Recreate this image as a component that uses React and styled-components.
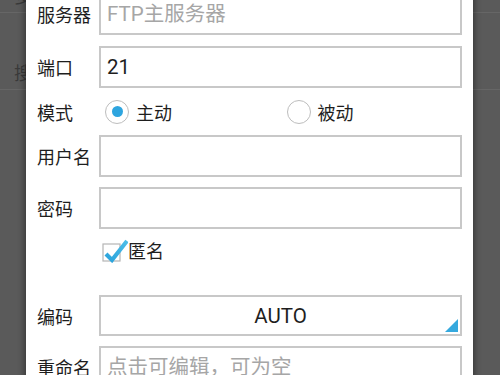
import React from "react";
import styled, { createGlobalStyle } from "styled-components";

const Global = createGlobalStyle`
  html, body { margin: 0; padding: 0; background: #5a5a5a; overflow: hidden; }
  * { box-sizing: border-box; }
`;

const FONT = `Roboto, "Noto Sans CJK SC", "Noto Sans", sans-serif`;

const Screen = styled.div`
  position: relative;
  width: 500px;
  height: 375px;
  overflow: hidden;
  background: #5a5a5a;
  font-family: ${FONT};
`;

const BgList = styled.div`
  display: flex;
  flex-direction: column;
`;

const BgRow = styled.div`
  height: ${(p) => p.$h}px;
  padding-left: 14px;
  padding-top: ${(p) => p.$pt}px;
  border-bottom: 1px solid #666;
  color: #3a3a3a;
  font-size: 18px;
  line-height: 18px;
  overflow: hidden;
`;

const Overlay = styled.div`
  position: absolute;
  inset: 0;
  display: flex;
  align-items: flex-start;
`;

const Dialog = styled.div`
  margin-left: 26px;
  margin-top: -18px;
  width: 447px;
  background: #fff;
  padding: 11px 11px 0 11px;
  box-shadow: 0 0 6px 2px rgba(0, 0, 0, 0.35);
  display: flex;
  flex-direction: column;
`;

const Row = styled.div`
  display: grid;
  grid-template-columns: 62px 1fr;
  align-items: center;
  height: ${(p) => p.$h}px;
  margin-bottom: ${(p) => p.$mb || 0}px;
`;

const Label = styled.div`
  font-size: 18px;
  color: #1e1e1e;
  white-space: nowrap;
`;

const TextInput = styled.input`
  height: 100%;
  width: 100%;
  border: 2px solid #c8c8c8;
  border-radius: 0;
  padding: 0 6px;
  font-family: ${FONT};
  font-size: 20.5px;
  color: #1e1e1e;
  background: #fff;
  outline: none;
  &::placeholder { color: #a6a6a6; }
`;

const Select = styled.div`
  position: relative;
  height: 100%;
  border: 2px solid #c8c8c8;
  display: flex;
  align-items: center;
  justify-content: center;
  font-size: 20.5px;
  color: #1e1e1e;
`;

const Corner = styled.div`
  position: absolute;
  right: 2px;
  bottom: 2px;
  width: 13px;
  height: 13px;
  background: #35a9de;
  clip-path: polygon(100% 0, 100% 100%, 0 100%);
`;

const RadioGroup = styled.div`
  display: grid;
  grid-template-columns: 1fr 1fr;
`;

const RadioItem = styled.label`
  display: flex;
  align-items: center;
  gap: 7px;
  padding-left: 6px;
  font-size: 18px;
  color: #1e1e1e;
`;

const RadioCircle = styled.span`
  width: 24px;
  height: 24px;
  border-radius: 50%;
  border: 1.5px solid #bdbdbd;
  display: flex;
  align-items: center;
  justify-content: center;
  background: #fff;
  &::after {
    content: "";
    width: 11px;
    height: 11px;
    border-radius: 50%;
    background: ${(p) => (p.$on ? "#2ea5df" : "transparent")};
  }
`;

const CheckItem = styled.label`
  display: flex;
  align-items: center;
  gap: 0;
  padding-left: 1px;
  font-size: 18px;
  color: #1e1e1e;
`;

const CheckIcon = () => (
  <svg width="28" height="26" viewBox="0 0 28 26">
    <defs>
      <linearGradient id="ck" x1="0" y1="1" x2="1" y2="0">
        <stop offset="0" stopColor="#2aa3dc" />
        <stop offset="1" stopColor="#4cbde8" />
      </linearGradient>
    </defs>
    <rect x="3" y="7" width="17" height="17" fill="#fff" stroke="#b5b5b5" strokeWidth="1.2" />
    <path d="M6 17 L12 23 L27 4" fill="none" stroke="url(#ck)" strokeWidth="4.2" strokeLinejoin="miter" />
  </svg>
);

export default function App() {
  return (
    <Screen>
      <Global />
      <BgList>
        <BgRow $h={13} $pt={0}>
          <span style={{ position: "relative", top: -12 }}>多</span>
        </BgRow>
        <BgRow $h={77} $pt={52}>搜</BgRow>
      </BgList>
      <Overlay>
        <Dialog>
          <Row $h={42} $mb={11}>
            <Label>服务器</Label>
            <TextInput placeholder="FTP主服务器" />
          </Row>
          <Row $h={42}>
            <Label>端口</Label>
            <TextInput defaultValue="21" />
          </Row>
          <Row $h={47}>
            <Label>模式</Label>
            <RadioGroup>
              <RadioItem>
                <RadioCircle $on />
                主动
              </RadioItem>
              <RadioItem>
                <RadioCircle />
                被动
              </RadioItem>
            </RadioGroup>
          </Row>
          <Row $h={42} $mb={10}>
            <Label>用户名</Label>
            <TextInput />
          </Row>
          <Row $h={42}>
            <Label>密码</Label>
            <TextInput type="password" />
          </Row>
          <Row $h={42} $mb={24}>
            <Label />
            <CheckItem>
              <CheckIcon />
              匿名
            </CheckItem>
          </Row>
          <Row $h={41} $mb={10}>
            <Label>编码</Label>
            <Select>
              AUTO
              <Corner />
            </Select>
          </Row>
          <Row $h={42}>
            <Label>重命名</Label>
            <TextInput placeholder="点击可编辑，可为空" />
          </Row>
        </Dialog>
      </Overlay>
    </Screen>
  );
}
